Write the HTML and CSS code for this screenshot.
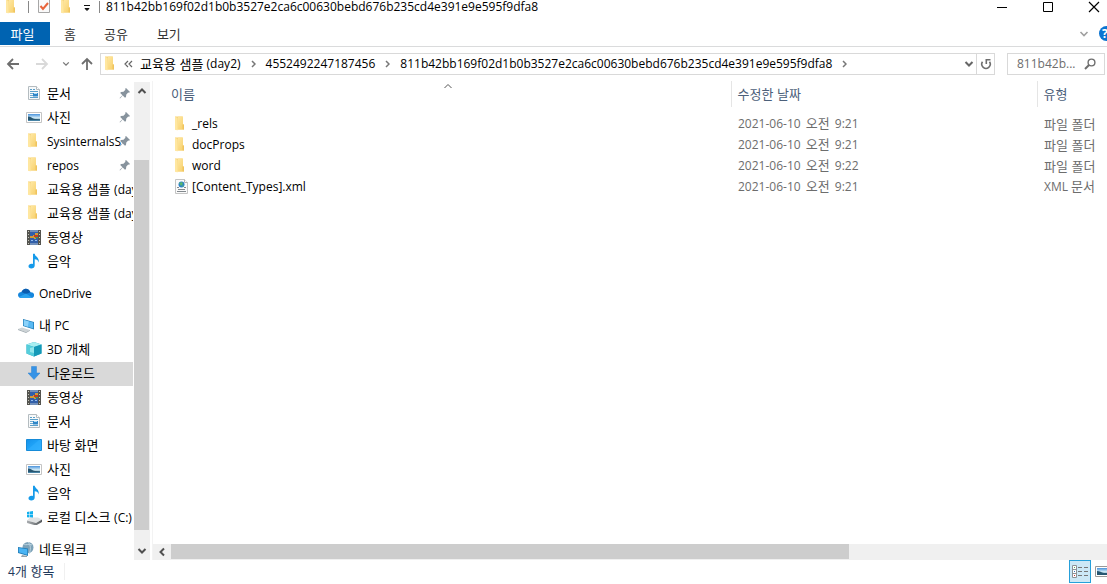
FILE: index.html
```html
<!DOCTYPE html>
<html lang="ko">
<head>
<meta charset="utf-8">
<meta name="viewport" content="width=device-width, initial-scale=1">
<title>811b42bb169f02d1b0b3527e2ca6c00630bebd676b235cd4e391e9e595f9dfa8</title>
<link rel="stylesheet" href="styles.css">
</head>
<body>
<svg class="sprite" aria-hidden="true">
  <defs>
    <linearGradient id="gFolder" x1="0" x2="1" y1="0" y2="1"><stop offset="0" stop-color="#ffe9a6"/><stop offset="1" stop-color="#f7cf69"/></linearGradient>
    <linearGradient id="gPhoto" x1="0" x2="0" y1="0" y2="1"><stop offset="0" stop-color="#4a93dc"/><stop offset=".55" stop-color="#d3ecf7"/><stop offset="1" stop-color="#3c6f8a"/></linearGradient>
    <linearGradient id="gDesk" x1="0" x2="1" y1="0" y2="1"><stop offset="0" stop-color="#1591ea"/><stop offset=".5" stop-color="#1fa4f8"/><stop offset="1" stop-color="#2bb0ff"/></linearGradient>
    <linearGradient id="gDisk" x1="0" x2="1" y1="0" y2="0"><stop offset="0" stop-color="#a9adb0"/><stop offset="1" stop-color="#55595c"/></linearGradient>
  </defs>
  <symbol id="folder" viewBox="1 1 16 16"><path d="M3 1.500h7.500v13H3z" fill="#f6d27a"/><path d="M6 1.500h5v8h1v5H5z" fill="url(#gFolder)"/><path d="M3 1.500l2.500 1.500V15.500L3 14.500z" fill="#ffe7a0"/><path d="M10.500 9.500h1.500v5h-1.500z" fill="#efc45e"/></symbol>
  <symbol id="doc" viewBox="0 0 16 16"><path d="M2.500 1.500h8l3 3v10h-11z" fill="#f7f9fa" stroke="#b4bcc0"/><path d="M10.500 1.500v3h3" fill="#fff" stroke="#b4bcc0"/><path d="M4 4.500h2M7 4.500h2M4 6.500h8M4 12.500h8" stroke="#5a9fc9"/><path d="M4 8.500h3M4 10.500h3" stroke="#71acd0"/><path d="M7 8h5v3.500H7z" fill="#2f86c8"/><path d="M8 8h3v1H8z" fill="#a9d9f4"/></symbol>
  <symbol id="photo" viewBox="0 0 16 16"><path d="M.5 3.500h15v10H.5z" fill="#fff" stroke="#c4c4c4"/><path d="M2 5h12v7H2z" fill="url(#gPhoto)"/><path d="M2 7.500c3 0 4 2 7 2.500l5 .2V12H2z" fill="#275671"/><path d="M2 11h12v1H2z" fill="#4884a6"/></symbol>
  <symbol id="video" viewBox="0 0 16 16"><path d="M1 1h14v15H1z" fill="#54544f"/><path d="M4 1h8v15H4z" fill="#315fa9"/><path d="M4 1h8v2H4zM4 14h8v2H4z" fill="#7190bb"/><path d="M2 2h1v1H2zM2 5h1v1H2zM2 8h1v1H2zM2 11h1v1H2zM2 14h1v1H2zM13 2h1v1h-1zM13 5h1v1h-1zM13 8h1v1h-1zM13 11h1v1h-1zM13 14h1v1h-1z" fill="#c4c4ba"/><path d="M4 7h3V6h2V4h3v4l-2 1v1H8V9H4z" fill="#d39a35"/><path d="M8 6h4v2H8z" fill="#c83822"/><path d="M9 8h3v1H9z" fill="#3d9d48"/><path d="M5 11h2v1H5zM9 11h2v1H9z" fill="#91bbee"/></symbol>
  <symbol id="music" viewBox="0 0 16 16"><path d="M7 .8h1.700c.4 3 4.800 3.300 4 8.700-.7-2.200-1.800-3-4-3.200v6.200c0 1.900-1.500 3-3.500 3-1.700 0-2.700-.9-2.700-2.200C2.500 11.500 4.500 10.300 7 11z" fill="#159aea"/></symbol>
  <symbol id="cloud" viewBox="0 0 16 16"><path d="M3.500 7C5 3 10 2 12.500 7.200 15.500 7 16.500 9 16 11c-.3 1.500-1.500 2-3 2H3.500C1.500 13 0 11.800 0 10s1.500-3 3.500-3z" fill="#1686dc"/><path d="M3.500 7C5 3 10 2 12.500 7.200L8 9z" fill="#0c5cae"/><path d="M1 12l7-3.500 6.500 4.200c-.4.200-.9.300-1.500.3H3.500c-1 0-1.900-.4-2.500-1z" fill="#2ba2ee"/></symbol>
  <symbol id="pc" viewBox="0 0 16 16"><path d="M5 2l11 3v7.500L5 9z" fill="#237fb9"/><path d="M5.800 3l9.400 2.600v5.800L5.800 8.500z" fill="#58b9f3"/><path d="M5.800 3l5 1.500-1 5.200-4-1.300z" fill="#8bd2fa"/><path d="M0 12l4-1.500 8 2.500-4 2z" fill="#cdd3d6"/><path d="M0 12l8 3 4-2v.8L8 16l-8-3z" fill="#a4aeb4"/></symbol>
  <symbol id="cube" viewBox="0 0 16 16"><path d="M8 1l7.500 2.500v9L8 15.500.5 12.500v-9z" fill="#2aa8c4"/><path d="M8 1l7.500 2.500L8 6 .5 3.500z" fill="#a8eef0"/><path d="M.5 3.500L8 6v9.500L.5 12.500z" fill="#56cedb"/><path d="M8 6l7.500-2.500v9L8 15.500z" fill="#1599b7"/><path d="M4 7l4-1v6l-4-1z" fill="#92e6eb"/></symbol>
  <symbol id="down" viewBox="0 0 16 16"><path d="M5.500 1.500h5v6.500h3.500L8 14.500 2 8h3.500z" fill="#3693e6" stroke="#2d83d0" stroke-width=".5"/></symbol>
  <symbol id="desktop" viewBox="0 0 16 16"><path d="M.5 2.500h15v11H.5z" fill="url(#gDesk)" stroke="#168bd8"/><path d="M1 13L13 3h2.500v10z" fill="#35b1ff" opacity=".5"/></symbol>
  <symbol id="disk" viewBox="0 0 16 16"><path d="M1 3l2.500-.4v2.700H1zM4 2.500L7 2v3.300H4zM1 5.800h2.500v2.700L1 8.200zM4 5.800h3V9l-3-.4z" fill="#13b0ee"/><path d="M1 11.500l3-3h8l4 2-6 3.500z" fill="#e0e2e3"/><path d="M1 11.500l9 2.500 6-3.500v2.500l-6 3.500-9-2.500z" fill="url(#gDisk)"/></symbol>
  <symbol id="network" viewBox="0 0 16 16"><circle cx="10" cy="6.500" r="5.500" fill="#7da2b8"/><path d="M6 3c2 2 5-1 8 1M10 1c3 3 3 8 1 12" stroke="#b9d2df" fill="none"/><path d="M0 6l10 1.500V15L0 12z" fill="#247fb9"/><path d="M.8 7l8.400 1.300v5.400L.8 11.200z" fill="#4ab4f4"/><path d="M4 14l5 1v1H3z" fill="#95a2aa"/></symbol>
  <symbol id="xml" viewBox="0 0 16 16"><path d="M2.500.5h9l3 3v11h-12z" fill="#fafafa" stroke="#c4c4c4"/><path d="M11.500.5v3h3" fill="#fff" stroke="#b4b4b4"/><circle cx="8.500" cy="5.500" r="3" fill="#2b82ca"/><path d="M6 4l3-1 1 2-2 2zM9 7l2-1-1 2z" fill="#5bb76b"/><path d="M4 8.500h2M11 8.500h2M5 10.500h7M4 12.500h9" stroke="#83898e"/></symbol>
  <symbol id="pin" viewBox="0 0 12 12"><path d="M7 1l4 4-1 .8-.8-.2L7.300 7.500 7 10l-1 .8L3.700 8.500 1 11.500.6 11l2.900-2.800L1.200 6l.8-1 2.500-.3L6.400 2.800 6.200 1.800z" fill="#87939d"/></symbol>
  <symbol id="chev" viewBox="0 0 10 10"><path d="M1.500 3L5 6.500 8.500 3" fill="none" stroke="currentColor" stroke-width="var(--w)"/></symbol>
</svg>

<div class="window">
  <header class="titlebar">
    <div class="quick">
      <svg class="i16" aria-hidden="true"><use href="#folder"/></svg>
      <span class="bar"></span>
      <button class="plain" aria-label="속성"><svg width="14" height="15" viewBox="0 0 14 15"><path d="M1.500-1v14.500h11V-1" fill="#fafafa" stroke="#a7a7a7"/><path d="M3.500 7l2.500 3 5-6" fill="none" stroke="#e8643a" stroke-width="2"/></svg></button>
      <button class="plain" aria-label="새 폴더"><svg class="i16" aria-hidden="true"><use href="#folder"/></svg></button>
      <button class="plain" aria-label="빠른 실행 도구 모음 사용자 지정"><svg width="8" height="10" viewBox="0 0 8 10"><path d="M1 3.500h6M2 6.500h4L4 8.500z" fill="#111" stroke="#111"/></svg></button>
      <span class="bar"></span>
    </div>
    <h1>811b42bb169f02d1b0b3527e2ca6c00630bebd676b235cd4e391e9e595f9dfa8</h1>
    <div class="controls">
      <button class="plain" aria-label="최소화"><svg width="12" height="12"><path d="M1 6.500h10" stroke="#000"/></svg></button>
      <button class="plain" aria-label="최대화"><svg width="12" height="12"><path d="M1.500 1.500h9v9h-9z" fill="none" stroke="#000"/></svg></button>
      <button class="plain" aria-label="닫기"><svg width="12" height="12"><path d="M1 1l10 10M11 1L1 11" stroke="#000" stroke-width="1.200"/></svg></button>
    </div>
  </header>

  <div class="ribbon ko">
    <button class="tab file">파일</button>
    <button class="tab">홈</button>
    <button class="tab">공유</button>
    <button class="tab">보기</button>
    <div class="ribbon-end">
      <button class="plain pale" aria-label="리본 확장"><svg class="i10"><use href="#chev"/></svg></button>
      <button class="plain help" aria-label="도움말">?</button>
    </div>
  </div>

  <div class="address-row">
    <div class="history">
      <button class="plain" aria-label="뒤로"><svg width="14" height="14"><path d="M13 7H2M7 2L2 7l5 5" fill="none" stroke="#6e6e6e" stroke-width="1.800"/></svg></button>
      <button class="plain" aria-label="앞으로" disabled><svg width="14" height="14"><path d="M1 7h11M7 2l5 5-5 5" fill="none" stroke="#d9d9d9" stroke-width="1.800"/></svg></button>
      <button class="plain grey" aria-label="최근 위치"><svg class="i8"><use href="#chev"/></svg></button>
      <button class="plain" aria-label="위로"><svg width="14" height="14"><path d="M7 13V2M2 7l5-5 5 5" fill="none" stroke="#6e6e6e" stroke-width="1.800"/></svg></button>
    </div>
    <div class="address">
      <svg class="i16" aria-hidden="true"><use href="#folder"/></svg>
      <button class="plain more" aria-label="상위 폴더"><svg width="9" height="8"><path d="M4 1L1 4l3 3M8 1L5 4l3 3" fill="none" stroke="#666" stroke-width="1.200"/></svg></button>
      <button class="plain"><span class="ko">교육용 샘플</span> (day2)</button>
      <svg class="next" width="5" height="8"><path d="M1 1l3 3-3 3" fill="none" stroke="#777" stroke-width="1.500"/></svg>
      <button class="plain">4552492247187456</button>
      <svg class="next" width="5" height="8"><path d="M1 1l3 3-3 3" fill="none" stroke="#777" stroke-width="1.500"/></svg>
      <button class="plain">811b42bb169f02d1b0b3527e2ca6c00630bebd676b235cd4e391e9e595f9dfa8</button>
      <svg class="next" width="5" height="8"><path d="M1 1l3 3-3 3" fill="none" stroke="#777" stroke-width="1.500"/></svg>
      <button class="plain drop" aria-label="이전 위치"><svg class="i10"><use href="#chev"/></svg></button>
      <button class="plain refresh" aria-label="새로 고침"><svg width="12" height="12"><path d="M2.500 3.800A4.200 4.200 0 1 0 9.500 3.800" fill="none" stroke="#6e6e6e" stroke-width="1.600"/><path d="M10.500 1.800H6.300V6" fill="none" stroke="#6e6e6e" stroke-width="1.600"/></svg></button>
    </div>
    <div class="search">
      <input type="text" aria-label="검색" placeholder="811b42b...">
      <button class="plain" aria-label="검색 시작"><svg width="12" height="12"><circle cx="7.500" cy="4.500" r="3.400" fill="none" stroke="#6e6e6e" stroke-width="1.400"/><path d="M5 7l-4 4" stroke="#6e6e6e" stroke-width="2"/></svg></button>
    </div>
  </div>

  <main class="body">
    <nav class="nav" aria-label="탐색 창">
      <ul class="tree ko">
        <li><a class="sub" href="#"><svg class="i16"><use href="#doc"/></svg><span>문서</span><svg class="pin"><use href="#pin"/></svg></a></li>
        <li><a class="sub" href="#"><svg class="i16"><use href="#photo"/></svg><span>사진</span><svg class="pin"><use href="#pin"/></svg></a></li>
        <li><a class="sub" href="#"><svg class="i16"><use href="#folder"/></svg><span class="en">SysinternalsS</span><svg class="pin"><use href="#pin"/></svg></a></li>
        <li><a class="sub" href="#"><svg class="i16"><use href="#folder"/></svg><span class="en">repos</span><svg class="pin"><use href="#pin"/></svg></a></li>
        <li><a class="sub" href="#"><svg class="i16"><use href="#folder"/></svg><span>교육용 샘플 <span class="en">(day2)</span></span></a></li>
        <li><a class="sub" href="#"><svg class="i16"><use href="#folder"/></svg><span>교육용 샘플 <span class="en">(day2)</span></span></a></li>
        <li><a class="sub" href="#"><svg class="i16"><use href="#video"/></svg><span>동영상</span></a></li>
        <li><a class="sub" href="#"><svg class="i16"><use href="#music"/></svg><span>음악</span></a></li>
        <li class="root"><a href="#"><svg class="i16"><use href="#cloud"/></svg><span class="en">OneDrive</span></a></li>
        <li class="root"><a href="#"><svg class="i16"><use href="#pc"/></svg><span>내 <span class="en">PC</span></span></a></li>
        <li><a class="sub" href="#"><svg class="i16"><use href="#cube"/></svg><span><span class="en">3D</span> 개체</span></a></li>
        <li><a class="sub current" href="#" aria-current="true"><svg class="i16"><use href="#down"/></svg><span>다운로드</span></a></li>
        <li><a class="sub" href="#"><svg class="i16"><use href="#video"/></svg><span>동영상</span></a></li>
        <li><a class="sub" href="#"><svg class="i16"><use href="#doc"/></svg><span>문서</span></a></li>
        <li><a class="sub" href="#"><svg class="i16"><use href="#desktop"/></svg><span>바탕 화면</span></a></li>
        <li><a class="sub" href="#"><svg class="i16"><use href="#photo"/></svg><span>사진</span></a></li>
        <li><a class="sub" href="#"><svg class="i16"><use href="#music"/></svg><span>음악</span></a></li>
        <li><a class="sub" href="#"><svg class="i16"><use href="#disk"/></svg><span>로컬 디스크 <span class="en">(C:)</span></span></a></li>
        <li class="root"><a href="#"><svg class="i16"><use href="#network"/></svg><span>네트워크</span></a></li>
      </ul>
      <div class="vscroll">
        <button class="plain" aria-label="위로 스크롤"><svg class="i10 up"><use href="#chev"/></svg></button>
        <div class="vtrack"><div class="vthumb"></div></div>
        <button class="plain" aria-label="아래로 스크롤"><svg class="i10"><use href="#chev"/></svg></button>
      </div>
    </nav>

    <section class="files">
      <div class="list">
        <table>
          <colgroup><col><col class="c-date"><col class="c-type"></colgroup>
          <thead><tr class="ko"><th scope="col">이름<svg class="i10 sort up"><use href="#chev"/></svg></th><th scope="col">수정한 날짜</th><th scope="col">유형</th></tr></thead>
          <tbody>
            <tr><td><a href="#"><svg class="i16"><use href="#folder"/></svg>_rels</a></td><td>2021-06-10 <span class="ko ampm">오전</span> 9:21</td><td class="ko">파일 폴더</td></tr>
            <tr><td><a href="#"><svg class="i16"><use href="#folder"/></svg>docProps</a></td><td>2021-06-10 <span class="ko ampm">오전</span> 9:21</td><td class="ko">파일 폴더</td></tr>
            <tr><td><a href="#"><svg class="i16"><use href="#folder"/></svg>word</a></td><td>2021-06-10 <span class="ko ampm">오전</span> 9:22</td><td class="ko">파일 폴더</td></tr>
            <tr><td><a href="#"><svg class="i16"><use href="#xml"/></svg>[Content_Types].xml</a></td><td>2021-06-10 <span class="ko ampm">오전</span> 9:21</td><td>XML <span class="ko">문서</span></td></tr>
          </tbody>
        </table>
      </div>
      <div class="hscroll">
        <button class="plain" aria-label="왼쪽으로 스크롤"><svg class="i10 left"><use href="#chev"/></svg></button>
        <div class="htrack"><div class="hthumb"></div></div>
        <button class="plain edge" aria-label="오른쪽으로 스크롤"><svg class="i10 right"><use href="#chev"/></svg></button>
      </div>
    </section>
  </main>

  <footer class="status">
    <span class="count">4<span class="ko">개 항목</span></span>
    <div class="views">
      <button class="plain view-on" aria-label="자세히"><svg width="16" height="14"><path d="M.5.5h4v12h-4zM.5 4.500h4M.5 8.500h4" fill="#fff" stroke="#8c9296"/><path d="M6 2.500h4M12 2.500h4M6 6.500h4M12 6.500h4M6 10.500h4M12 10.500h4" stroke="#777"/><path d="M2 2h1v1H2z" fill="#55a455"/><path d="M2 6h1v1H2z" fill="#357abd"/><path d="M2 10h1v1H2z" fill="#c33"/></svg></button>
      <button class="plain view" aria-label="큰 아이콘"><svg width="16" height="12" viewBox="0 0 16 12"><path d="M.5.5h15v10H.5z" fill="#fff" stroke="#999"/><path d="M2 2h12v7H2z" fill="url(#gPhoto)"/><path d="M2 5c3 0 4 1.500 7 2h5v2H2z" fill="#275671"/></svg></button>
    </div>
  </footer>
</div>
</body>
</html>
```
FILE: styles.css
```css
* { box-sizing: border-box; }
body {
  margin: 0;
  background: #fff;
  color: #000;
  font: 12px/16px "Open Sans", "Noto Sans CJK KR", sans-serif;
}
.ko { font-size: 13px; font-family: "Noto Sans CJK KR", sans-serif; font-weight: 400; }
.en { font-size: 12px; font-family: "Open Sans", "Noto Sans CJK KR", sans-serif; font-weight: 400; }
svg { display: block; flex: none; --w: 1.600; }
.sprite { position: absolute; width: 0; height: 0; }
.i16 { width: 16px; height: 16px; }
.i10 { width: 10px; height: 10px; }
.i8 { width: 8px; height: 8px; }
.up { transform: rotate(180deg); }
.left { transform: rotate(90deg); }
.right { transform: rotate(-90deg); }
.plain {
  display: flex;
  align-items: center;
  justify-content: center;
  padding: 0;
  border: 0;
  background: none;
  color: inherit;
  font: inherit;
  white-space: pre;
}
a { color: inherit; text-decoration: none; }

.window { display: flex; flex-direction: column; height: 100vh; overflow: hidden; }

.titlebar { display: flex; align-items: flex-start; height: 22px; }
.quick { display: flex; align-items: center; height: 13px; gap: 8px; padding-left: 4px; }
.quick .bar { width: 1px; height: 12px; background: #888; }
.titlebar h1 { flex: 1; min-width: 0; margin: 0; padding-left: 6px; font-size: 12px; line-height: 13px; font-weight: 400; }
.controls { display: flex; height: 13px; gap: 34px; padding-right: 7px; }

.ribbon { display: flex; height: 25px; padding-bottom: 1px; border-bottom: 1px solid #dadbdc; overflow: hidden; }
.tab { padding: 0 14px; border: 0; background: none; color: #333; font: inherit; line-height: 23px; }
.tab:nth-child(3) { padding-right: 15px; }
.tab.file { width: 50px; padding: 0 5px 0 0; background: #0063b1; color: #fff; }
.ribbon-end { display: flex; align-items: center; gap: 10px; margin-left: auto; }
.pale { color: #a0a0a0; }
.help { width: 8px; height: 15px; padding-left: 3px; border-radius: 8px 0 0 8px; background: #0b74d1; color: #fff; font: bold 12px/15px "Open Sans", sans-serif; overflow: hidden; justify-content: flex-start; }

.address-row { display: flex; align-items: center; gap: 12px; height: 34px; padding: 0 2px 0 6px; }
.history { display: flex; align-items: center; gap: 15px; width: 82px; }
.grey { color: #777; }
.history .grey { margin: 0 -3px 0 -2px; }
.history .plain:last-child { margin-left: -2px; }
.address { display: flex; align-items: center; flex: 1; height: 22px; border: 1px solid #d9d9d9; padding-left: 2px; min-width: 0; overflow: hidden; }
.more { margin: 0 7px 0 5px; }
.next { margin: 0 10px; }
.drop { margin-left: auto; padding: 0 2px; color: #666; }
.drop svg { --w: 2; }
.refresh { width: 18px; height: 20px; border-left: 1px solid #d9d9d9; }
.search { display: flex; align-items: center; width: 98px; height: 22px; padding: 0 8px 0 9px; border: 1px solid #d9d9d9; }
.search input { flex: 1; min-width: 0; padding: 0; border: 0; outline: 0; background: none; font: inherit; color: #333; }
.search input::placeholder { color: #6d6d6d; opacity: 1; }

.body { display: flex; flex: 1; min-height: 0; }
.nav { display: flex; width: 153px; border-right: 1px solid #f3f3f3; padding-right: 2px; }
.tree { flex: 1; min-width: 0; margin: 0 1px 0 0; padding: 1px 0 0; list-style: none; overflow: hidden; }
.tree a { display: flex; align-items: center; gap: 5px; height: 24px; padding: 0 0 2px 18px; white-space: nowrap; overflow: hidden; }
.tree a.sub { padding-left: 26px; }
.tree a.current { background: #d9d9d9; }
.tree a > .en { line-height: 18px; padding-top: 2px; }
.root { margin-top: 8px; }
.pin { width: 12px; height: 12px; margin-left: auto; margin-right: 2px; }
.tree a > span { min-width: 0; }
.vscroll { display: flex; flex-direction: column; width: 16px; margin-top: 1px; background: #f0f0f0; color: #505050; }
.vscroll .plain { height: 18px; }
.vscroll svg, .hscroll svg { --w: 2; }
.vtrack { flex: 1; display: flex; flex-direction: column; justify-content: flex-end; padding-bottom: 12px; }
.vthumb { height: 86%; width: 15px; background: #cdcdcd; }

.files { display: flex; flex-direction: column; flex: 1; min-width: 0; }
.list { flex: 1; min-height: 0; padding-left: 12px; overflow: hidden; }
table { width: 100%; table-layout: fixed; border-collapse: collapse; }
.c-date { width: 306px; }
.c-type { width: 70px; }
th { position: relative; height: 26px; padding: 0 6px; border-left: 1px solid #e5e5e5; color: #4c607a; font-weight: inherit; text-align: left; }
th:first-child { border-left: 0; }
.sort { position: absolute; top: 0; left: 50%; margin-left: -5px; color: #555; --w: 1; }
tbody::before { content: ""; display: block; height: 6px; }
td { height: 21px; padding: 0 6px; color: #6d6d6d; white-space: nowrap; line-height: 16px; }
td a { display: flex; align-items: center; gap: 3px; color: #000; }
.ampm { margin: 0 2px; }
td:first-child { padding-left: 8px; }
td + td { padding-left: 7px; }
.hscroll { display: flex; height: 16px; background: #f0f0f0; color: #505050; overflow: hidden; }
.hscroll .plain { width: 18px; background: #f0f0f0; }
.hscroll .edge { width: 2px; justify-content: flex-start; overflow: hidden; }
.htrack { flex: 1; }
.hthumb { width: 72.6%; height: 15px; background: #cdcdcd; }

.status { display: flex; align-items: center; height: 24px; padding: 0 0 1px 8px; color: #1e395b; overflow: hidden; }
.count { padding-right: 10px; border-right: 1px solid #f0f0f0; }
.views { display: flex; align-items: center; gap: 4px; margin-left: auto; height: 24px; }
.view-on { width: 22px; height: 23px; border: 1px solid #26a0da; background: #cce8f6; }
.view { width: 12px; overflow: hidden; justify-content: flex-start; }
```
